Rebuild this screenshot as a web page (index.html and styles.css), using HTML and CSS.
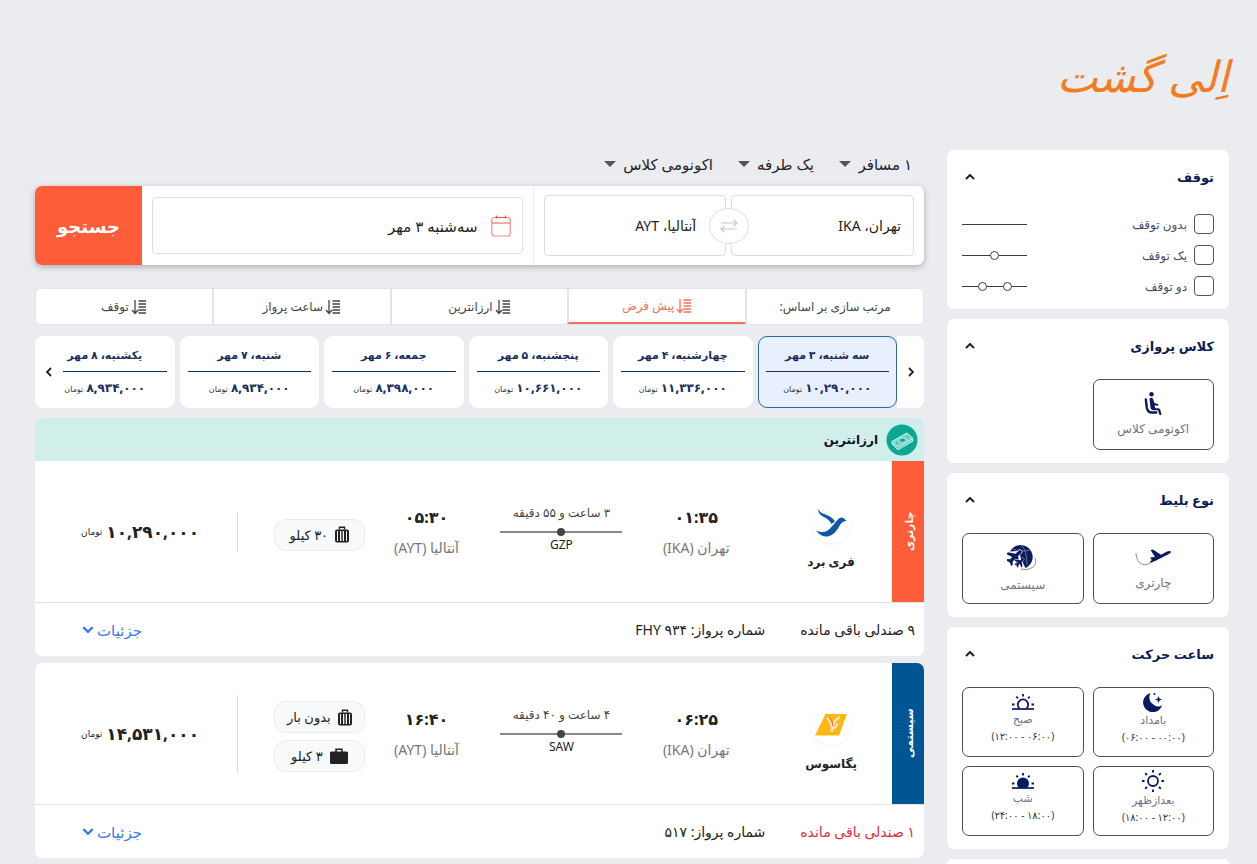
FILE: index.html
```html
<!DOCTYPE html>
<html lang="fa" dir="rtl">
<head>
<meta charset="utf-8">
<title>الی گشت</title>
<link rel="stylesheet" href="styles.css">
</head>
<body>
<svg class="defs" aria-hidden="true">
  <symbol id="sort" viewBox="0 0 16 16"><path d="M4 1v13M1 11l3 3.500 3-3.500M7.500 2H15M7.500 5H15M7.500 8H15M7.500 11H15M7.500 14H15" fill="none" stroke="currentColor" stroke-width="1.300"/></symbol>
  <symbol id="up" viewBox="0 0 10 6"><path d="M1 5l4-4 4 4" fill="none" stroke="currentColor" stroke-width="2"/></symbol>
  <symbol id="down" viewBox="0 0 10 6"><path d="M1 1l4 4 4-4" fill="none" stroke="currentColor" stroke-width="2"/></symbol>
  <symbol id="luggage" viewBox="0 0 14 16"><path d="M4.500 3V.8h5V3" fill="none" stroke="currentColor" stroke-width="1.400"/><path fill="currentColor" fill-rule="evenodd" d="M2 3h10a2 2 0 0 1 2 2v9a2 2 0 0 1-2 2H2a2 2 0 0 1-2-2V5a2 2 0 0 1 2-2zM2 4.500v10h1v-10zM5 4.500v10h1.300v-10zM7.700 4.500v10H9v-10zM11 4.500v10h1v-10z"/></symbol>
  <symbol id="case" viewBox="0 0 18 16"><path d="M6 4V1.200h6V4" fill="none" stroke="currentColor" stroke-width="1.500"/><rect y="3.500" width="18" height="12.500" rx="1.500" fill="currentColor"/></symbol>
  <symbol id="rays" viewBox="0 0 22 16"><path d="M11 0v2.400M4.300 2.600l1.700 1.700M17.700 2.600L16 4.300M0 10.500h2.500M19.500 10.500H22" stroke="currentColor" stroke-width="1.800" fill="none"/><path d="M0 15h22" stroke="currentColor" stroke-width="1.700"/></symbol>
</svg>
<div class="page">
  <header class="header"><a class="logo" href="#">اِلی گشت</a></header>

  <aside class="sidebar">
    <section class="panel">
      <div class="panel-head"><h2>توقف</h2><button class="fold" aria-label="بستن توقف"><svg><use href="#up"/></svg></button></div>
      <div class="stops">
        <div class="stop"><label><input type="checkbox"> بدون توقف</label><span class="track"></span></div>
        <div class="stop"><label><input type="checkbox"> یک توقف</label><span class="track"><i></i></span></div>
        <div class="stop"><label><input type="checkbox"> دو توقف</label><span class="track"><i></i><i></i></span></div>
      </div>
    </section>

    <section class="panel">
      <div class="panel-head"><h2>کلاس پروازی</h2><button class="fold" aria-label="بستن کلاس پروازی"><svg><use href="#up"/></svg></button></div>
      <div class="tiles">
        <button class="tile">
          <svg width="18" height="24" viewBox="0 0 18 24"><circle cx="7.500" cy="2.300" r="2.200"/><path d="M1.800 7.500l1 8q.8 5 5 5h4.500" fill="none" stroke="currentColor" stroke-width="2.400" stroke-linecap="round"/><path d="M5.500 6.500q2.500-1.500 3.500.5l1.500 4 4 1.300-.5 1.500-3.500-.5.800 3h3q1.500 0 2 1.500l1.200 5q-1.500 1-2.300-.5L14 18.300H9.500q-2.500 0-3-2.500z"/></svg>
          <span>اکونومی کلاس</span>
        </button>
      </div>
    </section>

    <section class="panel">
      <div class="panel-head"><h2>نوع بلیط</h2><button class="fold" aria-label="بستن نوع بلیط"><svg><use href="#up"/></svg></button></div>
      <div class="tiles">
        <button class="tile">
          <svg width="36" height="24" viewBox="0 0 36 24"><path d="M1 7C1 15 6 20 12 18.500q3-.8 5-3" fill="none" stroke="#888ba8"/><path d="M15 11.500l5-.5-4.500-7L18 3.500l8 5.200 6-3.200q3.500-1 4 .3.200 1.200-3 2.800L21 14.500l-5 2.200-1.200-.8 2-2z"/></svg>
          <span>چارتری</span>
        </button>
        <button class="tile">
          <svg width="32" height="28" viewBox="0 0 32 28"><path d="M3 7.500A12 12 0 1 1 18.500 24L14 15l-2-8z"/><path d="M6 5q7 3.500 17 1M14 1q6 5 6 20" fill="none" stroke="#8a94bb" stroke-width=".7"/><path d="M28 14q2.500 6-2.500 9.500T14 25" fill="none" stroke="#888ba8"/><path transform="translate(8.300 -1.500) rotate(45) scale(.86)" stroke="#fff" stroke-width="1.400" paint-order="stroke" d="M21 17v-3l-7.500-5V4C13.500 1 9.500 1 9.500 4v5L2 14v3l7.500-2.500V18L7 20v2.500l4.500-1.500 4.500 1.500V20l-2.500-2v-3.500z"/><path transform="translate(13 9.500) rotate(45) scale(.52)" stroke="#fff" stroke-width="1.800" paint-order="stroke" d="M21 17v-3l-7.500-5V4C13.500 1 9.500 1 9.500 4v5L2 14v3l7.500-2.500V18L7 20v2.500l4.500-1.500 4.500 1.500V20l-2.500-2v-3.500z"/></svg>
          <span>سیستمی</span>
        </button>
      </div>
    </section>

    <section class="panel">
      <div class="panel-head"><h2>ساعت حرکت</h2><button class="fold" aria-label="بستن ساعت حرکت"><svg><use href="#up"/></svg></button></div>
      <div class="tiles times">
        <button class="tile">
          <svg width="20" height="20" viewBox="0 0 20 20"><path d="M7.500 1A9.700 9.700 0 1 0 19 13.500 9 9 0 0 1 7.500 1z"/><path d="M15.500 4l1 2.500 2.500 1-2.500 1-1 2.500-1-2.500-2.500-1 2.500-1z"/><circle cx="11.500" cy="2" r="1"/></svg>
          <span>بامداد</span><small>(۰۰:۰۰ - ۰۶:۰۰)</small>
        </button>
        <button class="tile">
          <svg width="22" height="18" viewBox="0 0 22 16"><use href="#rays"/><path d="M7.500 14.500a5.200 5.200 0 1 1 7 0" fill="none" stroke="currentColor" stroke-width="1.800"/></svg>
          <span>صبح</span><small>(۰۶:۰۰ - ۱۲:۰۰)</small>
        </button>
        <button class="tile">
          <svg width="22" height="22" viewBox="0 0 22 22"><circle cx="11" cy="11" r="5" fill="none" stroke="currentColor" stroke-width="1.800"/><path d="M11 0v2.500M11 19.500V22M0 11h2.500M19.500 11H22M3.200 3.200L5 5M17 17l1.800 1.800M3.200 18.800L5 17M17 5l1.800-1.800" stroke="currentColor" stroke-width="1.900"/></svg>
          <span>بعدازظهر</span><small>(۱۲:۰۰ - ۱۸:۰۰)</small>
        </button>
        <button class="tile">
          <svg width="22" height="18" viewBox="0 0 22 16"><use href="#rays"/><path d="M7 15a6 6 0 1 1 8 0z"/></svg>
          <span>شب</span><small>(۱۸:۰۰ - ۲۴:۰۰)</small>
        </button>
      </div>
    </section>
    <section class="panel panel-next"></section>
  </aside>

  <main class="main">
    <form class="search" onsubmit="return false">
      <div class="options">
        <label class="option"><select aria-label="مسافر"><option>۱ مسافر</option></select><i></i></label>
        <label class="option"><select aria-label="نوع سفر"><option>یک طرفه</option></select><i></i></label>
        <label class="option"><select aria-label="کلاس"><option>اکونومی کلاس</option></select><i></i></label>
      </div>
      <div class="bar">
        <div class="places">
          <input type="text" aria-label="مبدا" value="تهران، IKA">
          <input type="text" class="to" aria-label="مقصد" value="آنتالیا، AYT">
          <button type="button" class="swap" aria-label="جابجایی"><svg width="18" height="14" viewBox="0 0 18 14"><path d="M1 4h16M13.500.8L17 4l-3.500 3M17 10H1M4.500 7L1 10l3.500 3.200" fill="none" stroke="#c9c9c9" stroke-width="1.200"/></svg></button>
        </div>
        <div class="when">
          <label class="date">
            <svg width="20" height="22" viewBox="0 0 20 22"><rect x=".8" y="2.500" width="18.400" height="18.500" rx="2.500" fill="none" stroke="#f58b80" stroke-width="1.200"/><path d="M1 8h18M5.500.5v3M14.500.5v3M4 2.500h12" stroke="#ee5a4a" stroke-width="1.200"/></svg>
            <input type="text" aria-label="تاریخ" value="سه‌شنبه ۳ مهر">
          </label>
        </div>
        <button class="go">جستجو</button>
      </div>
    </form>

    <div class="sort">
      <span>مرتب سازی بر اساس:</span>
      <button class="on"><svg><use href="#sort"/></svg>پیش فرض</button>
      <button><svg><use href="#sort"/></svg>ارزانترین</button>
      <button><svg><use href="#sort"/></svg>ساعت پرواز</button>
      <button><svg><use href="#sort"/></svg>توقف</button>
    </div>

    <div class="days">
      <button class="arrow" aria-label="قبلی"><svg width="6" height="10" viewBox="0 0 6 10"><path d="M1 1l4 4-4 4" fill="none" stroke="currentColor" stroke-width="1.800"/></svg></button>
      <button class="day on"><span>سه شنبه، ۳ مهر</span><b>۱۰,۲۹۰,۰۰۰ <small>تومان</small></b></button>
      <button class="day"><span>چهارشنبه، ۴ مهر</span><b>۱۱,۳۳۶,۰۰۰ <small>تومان</small></b></button>
      <button class="day"><span>پنجشنبه، ۵ مهر</span><b>۱۰,۶۶۱,۰۰۰ <small>تومان</small></b></button>
      <button class="day"><span>جمعه، ۶ مهر</span><b>۸,۳۹۸,۰۰۰ <small>تومان</small></b></button>
      <button class="day"><span>شنبه، ۷ مهر</span><b>۸,۹۳۴,۰۰۰ <small>تومان</small></b></button>
      <button class="day"><span>یکشنبه، ۸ مهر</span><b>۸,۹۳۴,۰۰۰ <small>تومان</small></b></button>
      <button class="arrow next" aria-label="بعدی"><svg width="6" height="10" viewBox="0 0 6 10"><path d="M5 1L1 5l4 4" fill="none" stroke="currentColor" stroke-width="1.800"/></svg></button>
    </div>

    <div class="cheapest">
      <svg width="32" height="32" viewBox="0 0 32 32"><circle cx="16" cy="16" r="15.500" fill="#0ba793"/><path d="M6 17.500l15-8.500 6 5.500-15 9z" fill="#7fd6ca" stroke="#d9f5f0"/><path d="M6 17.500v2.500l6 6 15-9v-2.500M6 19l6 6 15-9" fill="none" stroke="#d9f5f0" stroke-width=".8"/><ellipse cx="16.500" cy="16.300" rx="3" ry="2.200" fill="#0ba793" stroke="#d9f5f0" stroke-width=".7"/><path d="M10 18.500l2 1.500M21 12l2 1.500" stroke="#0ba793"/></svg>
      <h3>ارزانترین</h3>
    </div>

    <article class="flight">
      <div class="top">
        <div class="tag charter">چارتری</div>
        <div class="info">
          <div class="airline">
            <span class="mark"><svg width="32" height="30" viewBox="0 0 32 30"><path d="M3 1q0 5 5 7.500 6 2.500 8.500 7.500l3.500-2.500Q17 8.500 10.500 6.500 5 5 3 1z" fill="#0a59a6"/><path d="M1 22.500q8 3.500 13-1 4-4 8-9Q25 8.500 28.500 10l3 3q-4 0-6.500 4-5 10-12 11.500Q5.500 29 1 22.500z" fill="#0a59a6"/></svg></span>
            <b>فری برد</b>
          </div>
          <div class="place"><b>۰۱:۳۵</b><span>تهران (IKA)</span></div>
          <div class="route"><span>۳ ساعت و ۵۵ دقیقه</span><hr><em>GZP</em></div>
          <div class="place"><b>۰۵:۳۰</b><span>آنتالیا (AYT)</span></div>
          <div class="bags"><span class="bag"><svg width="14" height="17"><use href="#luggage"/></svg>۳۰ کیلو</span></div>
          <div class="price"><b>۱۰,۲۹۰,۰۰۰</b><small>تومان</small></div>
        </div>
      </div>
      <div class="foot"><span class="seats">۹ صندلی باقی مانده</span><span>شماره پرواز: FHY ۹۳۴</span><button class="more">جزئیات<svg><use href="#down"/></svg></button></div>
    </article>

    <article class="flight second">
      <div class="top">
        <div class="tag system">سیستمی</div>
        <div class="info">
          <div class="airline">
            <span class="mark"><svg width="32" height="24" viewBox="0 0 32 24"><path d="M10.500 1H32L24 22.500H0z" fill="#fdb813"/><path d="M12 5q5 4 5 14M16.500 19Q17 8 25 4M17.500 16q4-2 5-6" fill="none" stroke="#fbe3d2" stroke-width="2"/><path d="M14.500 4.500q3 3 3.500 9" fill="none" stroke="#e8663c"/></svg></span>
            <b>پگاسوس</b>
          </div>
          <div class="place"><b>۰۶:۲۵</b><span>تهران (IKA)</span></div>
          <div class="route"><span>۴ ساعت و ۴۰ دقیقه</span><hr><em>SAW</em></div>
          <div class="place"><b>۱۶:۴۰</b><span>آنتالیا (AYT)</span></div>
          <div class="bags"><span class="bag"><svg width="14" height="17"><use href="#luggage"/></svg>بدون بار</span><span class="bag"><svg width="18" height="16"><use href="#case"/></svg>۳ کیلو</span></div>
          <div class="price"><b>۱۴,۵۳۱,۰۰۰</b><small>تومان</small></div>
        </div>
      </div>
      <div class="foot"><span class="seats low">۱ صندلی باقی مانده</span><span>شماره پرواز: ۵۱۷</span><button class="more">جزئیات<svg><use href="#down"/></svg></button></div>
    </article>
  </main>
</div>
</body>
</html>
```

FILE: styles.css
```css
* { box-sizing: border-box; }
body { margin: 0; background: #eaecf0; color: #222; font-family: "Noto Sans", "DejaVu Sans", sans-serif; font-size: 14px; }
button, input, select { font: inherit; color: inherit; border: 0; background: none; padding: 0; margin: 0; }
button { cursor: pointer; }
h2, h3 { margin: 0; }
.defs { position: absolute; width: 0; height: 0; }

.page { min-height: 100vh; padding: 0 28px 0 35px; display: grid; grid-template-columns: 282px minmax(0, 1fr); grid-template-rows: 150px 1fr; column-gap: 23px; }
.header { grid-column: 1 / -1; padding-top: 36px; }
.logo { color: #f47c20; font-size: 43px; font-style: italic; line-height: 80px; text-decoration: none; white-space: nowrap; }

.sidebar { display: flex; flex-direction: column; gap: 10px; }
.panel { background: #fff; border-radius: 7px; padding: 0 15px 13px; }
.panel-next { flex: 1; padding: 0; border-radius: 7px 7px 0 0; }
.panel-head { height: 60px; padding-bottom: 6px; display: flex; align-items: center; justify-content: space-between; }
.panel-head h2 { font-size: 13px; color: #0b1b54; }
.fold { width: 16px; height: 16px; }
.fold svg { width: 10px; height: 6px; display: block; margin: auto; }
.stops { display: flex; flex-direction: column; gap: 11px; padding-top: 4px; }
.stop { height: 20px; display: flex; align-items: center; justify-content: space-between; }
.stop label { display: flex; align-items: center; gap: 7px; font-size: 12px; color: #4a4a6a; }
.stop input { appearance: none; width: 20px; height: 20px; border: 1px solid #555; border-radius: 4px; }
.track { width: 65px; height: 1px; background: #3a3a55; display: flex; align-items: center; justify-content: center; gap: 16px; }
.track i { width: 9px; height: 9px; flex: none; border: 1px solid #3a3a55; border-radius: 50%; background: #fff; }
.tiles { display: grid; grid-template-columns: 1fr 1fr; gap: 9px; }
.tile { height: 71px; border: 1px solid #4d4d55; border-radius: 7px; display: flex; flex-direction: column; align-items: center; justify-content: center; gap: 5px; color: #0b1b5c; fill: #0b1b5c; }
.tile span { font-size: 12px; line-height: 16px; color: #6f6f85; }
.times .tile { height: 70px; gap: 0; padding-bottom: 6px; }
.times .tile span { font-size: 11px; }
.tile small { font-size: 10px; line-height: 18px; color: #333; }

.main { min-width: 0; }
.options { height: 36px; padding: 0 12px 8px; display: flex; align-items: center; gap: 25px; }
.option { display: flex; align-items: center; gap: 7px; }
.option select { appearance: none; font-size: 15px; }
.option i { border: 6px solid transparent; border-top-color: #555; border-bottom: 0; }
.bar { display: flex; height: 79px; background: #fff; border-radius: 7px; box-shadow: 0 2px 6px #0004; overflow: hidden; }
.places { position: relative; flex: 1; min-width: 0; display: grid; grid-template-columns: 1fr 1fr; gap: 5px; padding: 9px 10px; border-left: 1px solid #eee; }
.places input { min-width: 0; border: 1px solid #ddd; border-radius: 4px; padding: 0 12px; font-size: 14px; }
.places .to { padding-right: 29px; }
.swap { position: absolute; left: 50%; top: 50%; width: 40px; height: 36px; margin: -18px 0 0 -20px; border: 1px solid #e2e2e2; border-radius: 50%; background: #fff; }
.swap svg { display: block; margin: auto; }
.when { flex: 1; min-width: 0; padding: 11px 10px; display: flex; }
.date { flex: 1; min-width: 0; display: flex; align-items: center; gap: 13px; border: 1px solid #dadfe3; border-radius: 4px; padding: 0 11px; }
.date input { flex: 1; min-width: 0; font-size: 15px; }
.go { width: 107px; background: #ff5c39; color: #fff; font-size: 18px; font-weight: bold; }

.sort { display: flex; height: 37px; margin-top: 23px; background: #fff; border-radius: 5px; border: 1px solid #e2e4ea; }
.sort > * { flex: 1; display: flex; align-items: center; justify-content: center; gap: 2px; font-size: 12px; color: #444; border-left: 2px solid #e2e4ea; }
.sort > :last-child { border-left: 0; }
.sort svg { width: 16px; height: 16px; }
.sort .on { color: #f5705a; border-bottom: 2px solid #f5705a; }

.days { position: relative; display: flex; gap: 5px; margin-top: 11px; height: 72px; }
.arrow { width: 27px; margin-left: -5px; background: #fff; border-radius: 0 8px 8px 0; flex: none; }
.arrow svg { display: block; margin: auto; }
.next { position: absolute; left: 0; top: 0; bottom: 0; width: 28px; margin: 0; border-radius: 8px 0 0 8px; }
.day { flex: 1; min-width: 0; background: #fff; border: 1px solid #fff; border-radius: 9px; padding: 0 7px; font-size: 11px; font-weight: bold; color: #1c2f5c; text-align: center; }
.day span { display: block; height: 34px; line-height: 34px; border-bottom: 1px solid #1c2f5c; white-space: nowrap; }
.day b { display: block; height: 34px; line-height: 32px; font-size: 12px; white-space: nowrap; }
.day small { font-size: 8px; font-weight: normal; color: #333; }
.day.on { background: #e8f0fe; border-color: #2b6a9b; }

.cheapest { display: flex; align-items: center; gap: 8px; height: 43px; margin-top: 10px; padding: 0 6px; background: #d0efeb; border-radius: 7px 7px 0 0; }
.cheapest h3 { font-size: 12px; color: #111; }
.flight { background: #fff; border-radius: 0 0 7px 7px; overflow: hidden; }
.second { border-radius: 7px; margin-top: 7px; }
.top { display: flex; height: 142px; border-bottom: 1px solid #e2e2e2; }
.tag { width: 32px; writing-mode: vertical-rl; transform: rotate(180deg); display: flex; align-items: center; justify-content: center; color: #fff; font-weight: bold; font-size: 11px; }
.charter { background: #ff5c39; }
.system { background: #005594; }
.info { flex: 1; min-width: 0; display: grid; grid-template-columns: 120fr 120fr 120fr 120fr 100fr 200fr; column-gap: 13px; align-items: center; }
.airline, .place, .route { display: flex; flex-direction: column; align-items: center; white-space: nowrap; }
.airline { gap: 10px; padding-top: 10px; }
.mark { width: 40px; height: 40px; border-radius: 50%; box-shadow: 0 1px 3px #0001; display: flex; align-items: center; justify-content: center; }
.airline b { font-size: 12px; line-height: 18px; }
.place { gap: 10px; }
.place b { font-size: 16px; line-height: 22px; }
.place span { font-size: 14px; line-height: 20px; color: #777; }
.route { align-items: stretch; text-align: center; font-size: 12px; padding-bottom: 6px; }
.route span { line-height: 18px; color: #444; }
.route hr { position: relative; width: 100%; height: 2px; margin: 9px 0 3px; border: 0; background: #888; overflow: visible; }
.route hr::after { content: ""; position: absolute; left: 50%; top: -3px; width: 8px; height: 8px; margin-left: -4px; border-radius: 50%; background: #444; }
.route em { font-style: normal; line-height: 18px; }
.bags { display: flex; flex-direction: column; gap: 7px; margin: 0 -12px 0 23px; padding-top: 6px; }
.bag { height: 32px; display: flex; align-items: center; justify-content: center; gap: 7px; background: #f7f9fb; border: 1px solid #e9ecf0; border-radius: 12px; font-size: 13px; white-space: nowrap; }
.price { display: flex; align-items: center; justify-content: center; gap: 4px; height: 40px; border-right: 1px solid #ddd; padding-left: 8px; white-space: nowrap; }
.second .price { height: 78px; }
.price b { font-size: 17px; }
.price small { font-size: 9px; }
.foot { display: flex; align-items: center; gap: 35px; height: 53px; padding: 0 9px; font-size: 14px; }
.foot .low { color: #d9303e; }
.more { margin-right: auto; margin-left: 38px; display: flex; align-items: center; gap: 3px; font-size: 15px; color: #3b7bea; }
.more svg { width: 12px; height: 7px; }
```
